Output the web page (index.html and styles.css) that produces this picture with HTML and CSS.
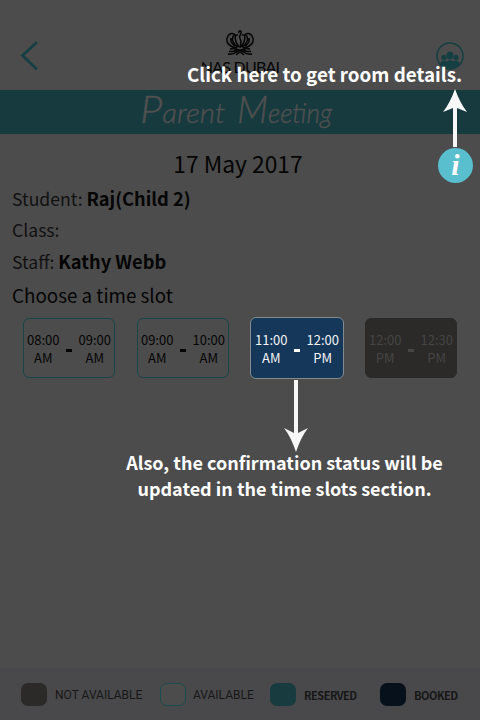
FILE: index.html
```html
<!DOCTYPE html>
<html lang="en">
<head>
<meta charset="utf-8">
<title>Parent Meeting</title>
<link rel="stylesheet" href="styles.css">
</head>
<body>
<div class="screen">
  <header class="topbar">
    <svg class="back" width="18" height="30" viewBox="0 0 18 30"><path d="M16 2 2.5 14.5 16 27.5"/></svg>
    <div class="brand">
      <svg class="crest" width="30" height="28" viewBox="0 0 30 28">
        <path d="M11 7C9 3 4 4 2.500 8C0 14 5 18 12 19M19 7C21 3 26 4 27.500 8C30 14 25 18 18 19M10 5C5 9 8 15 13 18M20 5C25 9 22 15 17 18M13 6C9 5 9 12 14 18M17 6C21 5 21 12 16 18M14 4C13 1 17 1 16 4L14.500 8 16 12 15 19M6 9C5 12 7 15 10 17M24 9C25 12 23 15 20 17"/>
        <path d="M5 20C9 18 12 21 15 21S21 18 25 20M3 25C8 26 12 23 15 21 18 23 22 26 27 25M4 22.500C8 23 10 22 12 21M26 22.500C22 23 20 22 18 21M11 26l4-3 4 3"/>
      </svg>
      <div class="name">NAS DUBAI</div>
    </div>
    <svg class="people" width="28" height="28" viewBox="0 0 28 28">
      <defs><clipPath id="disc"><circle cx="14" cy="14" r="13"/></clipPath></defs>
      <circle class="ring" cx="14" cy="14" r="13"/>
      <g clip-path="url(#disc)">
        <circle cx="8" cy="15.500" r="2.700"/><circle cx="20" cy="15.500" r="2.700"/><ellipse cx="14" cy="13.500" rx="3.400" ry="4"/>
        <path d="M4 23q0-4 4-4.500 2 0 2.500 1Q12 18 14 18t3.500 1.500q.5-1 2.500-1 4 .5 4 4.500v6H4z"/>
      </g>
    </svg>
  </header>
  <div class="band"><svg width="200" height="44" viewBox="0 0 200 44"><text x="1" y="33" textLength="85" lengthAdjust="spacingAndGlyphs"><tspan class="cap">P</tspan>arent</text><text x="98" y="33" textLength="95" lengthAdjust="spacingAndGlyphs"><tspan class="cap">M</tspan>eeting</text></svg></div>
  <main>
    <h1>17 May 2017</h1>
    <p class="row">Student: <b class="student">Raj(Child 2)</b></p>
    <p class="row">Class:</p>
    <p class="row">Staff: <b>Kathy Webb</b></p>
    <p class="choose">Choose a time slot</p>
    <div class="slots">
      <div class="slot"><span>08:00<br>AM</span><i></i><span>09:00<br>AM</span></div>
      <div class="slot"><span>09:00<br>AM</span><i></i><span>10:00<br>AM</span></div>
      <div class="slot active"><span>11:00<br>AM</span><i></i><span>12:00<br>PM</span></div>
      <div class="slot off"><span>12:00<br>PM</span><i></i><span>12:30<br>PM</span></div>
    </div>
  </main>
  <footer>
    <div class="key na"><i></i><span>NOT AVAILABLE</span></div>
    <div class="key av"><i></i><span>AVAILABLE</span></div>
    <div class="key re"><i></i><span>RESERVED</span></div>
    <div class="key bo"><i></i><span>BOOKED</span></div>
  </footer>
  <div class="tip tip-room">Click here to get room details.</div>
  <svg class="arrow up" width="24" height="58" viewBox="0 0 24 58"><path d="M12 0Q17 14 24 23L14 19V58H10V19L0 23Q7 14 12 0z"/></svg>
  <svg class="info" width="36" height="36" viewBox="0 0 36 36"><circle cx="18.500" cy="18.500" r="17.500"/><text x="18.500" y="27.500" text-anchor="middle">i</text></svg>
  <svg class="arrow down" width="24" height="72" viewBox="0 0 24 72"><path d="M12 72Q17 57 24 48L14 53V0H10V53L0 48Q7 57 12 72z"/></svg>
  <div class="tip tip-slot">Also, the confirmation status will be<br>updated in the time slots section.</div>
</div>
</body>
</html>
```
FILE: styles.css
```css
* { box-sizing: border-box; }
body { margin: 0; background: #4c4c4c; color: #050505; font-family: "Noto Sans CJK SC", "Noto Sans", sans-serif; }
p, h1 { margin: 0; font-weight: 400; }
.screen { position: relative; width: 480px; height: 720px; overflow: hidden; display: flex; flex-direction: column; }
.topbar { height: 90px; flex: none; display: flex; justify-content: space-between; align-items: flex-start; padding: 0 16px 0 20px; }
.back { margin-top: 41px; fill: none; stroke: #163f43; stroke-width: 2.8; stroke-linecap: round; }
.brand { width: 90px; margin: 29px 0 0 6px; text-align: center; }
.crest { display: block; margin: 0 auto; fill: none; stroke: #050505; stroke-width: 1.5; }
.name { font: 16px/19px Lato, sans-serif; letter-spacing: -0.75px; white-space: nowrap; }
.people { margin-top: 42px; fill: #163f43; }
.ring { fill: none; stroke: #163f43; stroke-width: 1.6; }
.band { height: 44px; flex: none; background: #163a3d; padding-left: 139px; }
.band svg { display: block; }
.band text { font: italic 300 27px Lato, sans-serif; fill: #505050; stroke: #505050; stroke-width: 0.4; }
.band .cap { font-size: 38px; }
main { flex: 1; }
h1 { height: 49px; margin-top: 5px; padding-right: 4px; text-align: center; font-size: 22.8px; line-height: 50px; }
.row { height: 31.5px; line-height: 31.5px; padding-left: 12px; font-size: 17.6px; color: #111; }
.row:nth-of-type(1) { margin-top: -5.5px; }
.row b { color: #050505; font-size: 18.3px; }
.choose { height: 37.5px; line-height: 36px; padding-left: 12px; font-size: 18.8px; }
.slots { display: flex; justify-content: space-between; padding: 0 23px; margin-top: 3px; }
.slot { width: 92px; height: 60px; border: 1px solid #1a4448; border-radius: 6px; display: flex; align-items: center; justify-content: space-between; padding: 2px 3px 0; font-size: 13px; line-height: 18px; text-align: center; }
.slot i { width: 6px; height: 3px; margin-top: 3px; background: #050505; }
.slot.active { width: 94px; height: 62px; margin: -1px; padding: 2px 4px 0; background: #153759; border-color: #838b91; color: #f2f4f6; }
.slot.active i { background: #fff; }
.slot.off { background: #2b2a28; border-color: #2b2a28; color: #454545; }
.slot.off i { background: #454545; }
footer { height: 52px; flex: none; background: #49494b; display: flex; align-items: center; padding-left: 21px; color: #171717; }
.key { display: flex; align-items: center; font: 400 12px/16px Roboto, sans-serif; }
.key i { width: 26px; height: 23px; border-radius: 7px; margin-right: 8px; }
.key span { white-space: nowrap; padding-top: 1px; }
.na { width: 139px; }
.av { width: 110px; }
.re { width: 110px; }
.re, .bo { font: 700 11px/16px "Noto Sans CJK SC", sans-serif; }
.re span, .bo span { letter-spacing: -0.5px; }
.na i { background: #2b2a28; }
.av i { border: 1px solid #1a4b4f; background: #4c4c4c; margin-right: 7px; }
.re i { background: #173b3e; }
.bo i { background: #06111c; }
.tip { position: absolute; color: #fff; font-weight: 700; white-space: nowrap; }
.tip-room { left: 187px; top: 59px; font-size: 18.8px; line-height: 30px; }
.tip-slot { left: 125px; top: 449px; width: 319px; text-align: center; font-size: 18px; line-height: 26px; }
.arrow { position: absolute; fill: #f7f7f7; }
.up { left: 443px; top: 89px; }
.down { left: 284px; top: 380px; }
.info { position: absolute; left: 437px; top: 147px; fill: #59becd; }
.info text { font: italic 700 30px "Liberation Serif", serif; fill: #fff; }
```
